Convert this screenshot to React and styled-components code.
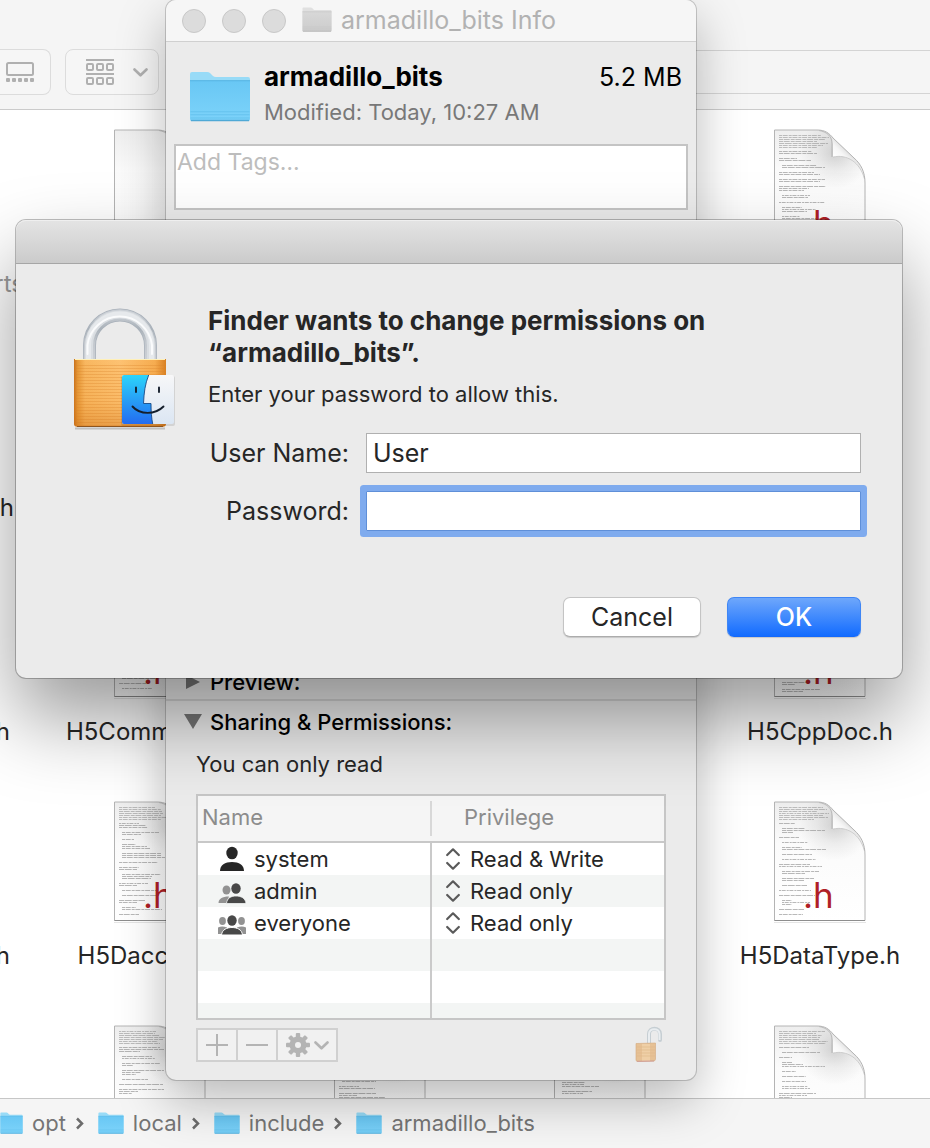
import React from "react";
import styled, { createGlobalStyle } from "styled-components";

const GlobalStyle = createGlobalStyle`
  *, *::before, *::after { box-sizing: border-box; }
  body {
    margin: 0;
    background: #fff;
    color: #262626;
    font-family: Inter, "Liberation Sans", sans-serif;
    font-size: 22px;
    line-height: 28px;
  }
  button, input, select, textarea { font: inherit; color: inherit; margin: 0; }
`;

/* ---------- Finder window ---------- */

const Desktop = styled.main`
  position: relative;
  height: 100vh;
  overflow: hidden;
`;

const FinderWindow = styled.div`
  display: flex;
  flex-direction: column;
  height: 100%;
`;

const Toolbar = styled.header`
  display: flex;
  align-items: flex-end;
  gap: 14px;
  height: 110px;
  flex: none;
  padding-bottom: 14px;
  background: #f5f5f5;
  border-bottom: 1px solid #cbcbcb;
`;

const ToolButton = styled.button`
  display: flex;
  align-items: center;
  justify-content: ${(p) => (p.$edge ? "flex-start" : "flex-end")};
  gap: 19px;
  width: ${(p) => (p.$edge ? 51 : 94)}px;
  height: 46px;
  padding: 0 ${(p) => (p.$edge ? 6 : 10)}px;
  border: 1px solid #dcdcdc;
  border-left-width: ${(p) => (p.$edge ? 0 : 1)}px;
  border-radius: ${(p) => (p.$edge ? "0 8px 8px 0" : "8px")};
  background: #f6f6f6;
  color: #b0b0b0;
`;

const ToolStrip = styled.div`
  flex: 1;
  height: 44px;
  margin-left: 28px;
  margin-bottom: 1px;
  border: 1px solid #d4d4d4;
  border-width: 1px 0;
`;

const FileArea = styled.section`
  flex: 1;
  min-height: 0;
  overflow: hidden;
`;

const FileGrid = styled.div`
  display: grid;
  grid-template-columns: 50px repeat(auto-fill, 220px);
  grid-auto-rows: 224px;
`;

const FileCell = styled.figure`
  grid-column: ${(p) => p.$col};
  grid-row: ${(p) => p.$row};
  display: flex;
  flex-direction: column;
  align-items: center;
  gap: 18px;
  margin: 0;
  padding-top: 19px;
`;

const FileLabel = styled.figcaption`
  font-size: 24px;
  line-height: 28px;
  white-space: nowrap;
`;

const EdgeLabel = styled.span`
  grid-column: 1;
  grid-row: ${(p) => p.$row};
  align-self: end;
  display: flex;
  justify-content: flex-end;
  width: ${(p) => p.$reach}px;
  padding-bottom: 36px;
  font-size: 24px;
  color: ${(p) => (p.$dim ? "#9a9a9a" : "inherit")};
`;

const PathBar = styled.nav`
  display: flex;
  align-items: center;
  flex: none;
  height: 50px;
  padding-bottom: 2px;
  border-top: 1px solid #c6c6c6;
  background: #f5f5f5;
  color: #757575;
`;

const Crumb = styled.a`
  display: flex;
  align-items: center;
  gap: 9px;
  color: inherit;
  text-decoration: none;
`;

const CrumbArrow = styled.svg`
  margin: 2px 14px 0 10px;
`;

/* ---------- Info window ---------- */

const InfoWindow = styled.section`
  position: absolute;
  top: 0;
  bottom: 68px;
  left: 166px;
  width: 530px;
  display: flex;
  flex-direction: column;
  border-radius: 10px;
  background: #ebebeb;
  box-shadow: 0 0 0 1px rgba(0, 0, 0, 0.18), 0 20px 50px rgba(0, 0, 0, 0.28);
`;

const InfoTitleBar = styled.header`
  display: flex;
  align-items: center;
  gap: 16px;
  flex: none;
  height: 42px;
  padding: 0 16px;
  border-bottom: 1px solid #d0d0d0;
  border-radius: 10px 10px 0 0;
  background: #f6f6f6;
`;

const WindowDot = styled.button`
  width: 24px;
  height: 24px;
  padding: 0;
  border: 1px solid #c8c8c8;
  border-radius: 50%;
  background: #dcdcdc;
`;

const WindowTitle = styled.h2`
  display: flex;
  align-items: center;
  gap: 9px;
  margin: 0;
  padding-bottom: 2px;
  font-size: 25px;
  font-weight: 400;
  color: #b2b2b2;
`;

const Summary = styled.div`
  display: flex;
  gap: 13px;
  padding: 19px 14px 18px 23px;
`;

const SummaryFolder = styled.div`
  display: flex;
  padding-top: 10px;
`;

const SummaryText = styled.div`
  flex: 1;
`;

const SummaryLine = styled.div`
  display: flex;
  justify-content: space-between;
  font-size: 25px;
  line-height: 32px;
  color: #000;
`;

const FolderName = styled.strong`
  font-size: 26px;
  font-weight: 700;
`;

const Modified = styled.div`
  padding-top: 5px;
  line-height: 28px;
  color: #787878;
`;

const TagBox = styled.textarea`
  display: block;
  height: 66px;
  margin: 0 8px;
  padding: 2px 1px;
  border: 2px solid #c4c4c4;
  border-radius: 0;
  background: #fff;
  resize: none;
  font-size: 23px;
  &::placeholder { color: #bdbdbd; }
`;

const Sections = styled.div`
  flex: 1;
  display: flex;
  flex-direction: column;
  justify-content: flex-end;
`;

const Disclosure = styled.button`
  display: flex;
  align-items: center;
  gap: 8px;
  width: 100%;
  height: ${(p) => (p.$open ? 42 : 37)}px;
  padding: 0 18px;
  border: 0;
  border-bottom: ${(p) => (p.$open ? "0" : "2px solid #d2d2d2")};
  background: none;
  font-size: 22px;
  font-weight: 500;
  color: #000;
`;

const Permissions = styled.div`
  padding: 7px 30px 18px;
`;

const Note = styled.p`
  margin: 0 0 16px;
`;

const TableBox = styled.div`
  height: 226px;
  overflow: hidden;
  border: 2px solid #c6c6c6;
  background: #fff;
`;

const Table = styled.table`
  width: 100%;
  table-layout: fixed;
  border-collapse: separate;
  border-spacing: 0;
`;

const HeadCell = styled.th`
  width: ${(p) => (p.$first ? "234px" : "auto")};
  height: 47px;
  padding: 5px 0;
  background: #f5f5f5;
  border-bottom: 2px solid #c8c8c8;
  font-weight: 400;
  text-align: left;
  color: #8c8c8c;
`;

const HeadText = styled.div`
  height: 35px;
  line-height: 32px;
  padding-left: ${(p) => (p.$first ? 4 : 32)}px;
  border-right: ${(p) => (p.$first ? "2px solid #d8d8d8" : "0")};
`;

const Row = styled.tr`
  background: #fff;
  &:nth-child(even) { background: #f3f5f4; }
`;

const Cell = styled.td`
  height: 32px;
  padding: 0;
  border-right: ${(p) => (p.$first ? "2px solid #cacaca" : "0")};
`;

const CellContent = styled.div`
  display: flex;
  align-items: center;
  gap: ${(p) => (p.$first ? 7 : 10)}px;
  padding-left: ${(p) => (p.$first ? 20 : 14)}px;
`;

const PrivilegeSelect = styled.select`
  appearance: none;
  height: 28px;
  padding: 0;
  border: 0;
  background: none;
`;

const Actions = styled.div`
  display: flex;
  justify-content: space-between;
  align-items: flex-start;
  padding: 6px 3px 0 0;
`;

const ActionGroup = styled.div`
  display: flex;
  padding: 2px 0 0 0;
`;

const ActionButton = styled.button`
  display: flex;
  align-items: center;
  justify-content: center;
  gap: 4px;
  width: ${(p) => (p.$wide ? 62 : 42)}px;
  height: 34px;
  padding: 0;
  border: 2px solid #d0d0d0;
  background: #f1f1f1;
  color: #b4b4b4;
  & + & { margin-left: -2px; }
`;

const LockButton = styled.button`
  display: flex;
  padding: 0;
  border: 0;
  background: none;
`;

/* ---------- Password dialog ---------- */

const Dialog = styled.section`
  position: absolute;
  top: 220px;
  left: 16px;
  right: 28px;
  border-radius: 10px;
  background: #ebebeb;
  box-shadow: 0 0 0 1px rgba(0, 0, 0, 0.25), 0 40px 80px rgba(0, 0, 0, 0.4);
`;

const DialogBar = styled.div`
  height: 44px;
  border-bottom: 1px solid #a6a6a6;
  border-radius: 10px 10px 0 0;
  background: linear-gradient(#e4e4e4, #cbcbcb);
  box-shadow: inset 0 1px 0 #efefef;
`;

const DialogBody = styled.div`
  display: flex;
  gap: 33px;
  padding: 41px 41px 41px 57px;
`;

const LockHolder = styled.div`
  flex: none;
  display: flex;
  align-items: flex-start;
  padding-top: 3px;
`;

const DialogForm = styled.form`
  flex: 1;
`;

const DialogTitle = styled.h1`
  max-width: 560px;
  margin: 0;
  font-size: 26px;
  line-height: 32px;
  font-weight: 700;
`;

const Hint = styled.p`
  margin: 11px 0 25px;
`;

const Fields = styled.div`
  display: grid;
  grid-template-columns: 141px 1fr;
  column-gap: 17px;
  row-gap: 18px;
  align-items: center;
  font-size: 25px;
`;

const FieldLabel = styled.label`
  justify-self: end;
  white-space: nowrap;
`;

const Field = styled.input`
  width: 100%;
  min-width: 0;
  height: 40px;
  padding: 0 6px;
  border: 1px solid ${(p) => (p.$focused ? "#5f8fd8" : "#b0b0b0")};
  border-radius: ${(p) => (p.$focused ? 1 : 0)}px;
  background: #fff;
  outline: none;
  box-shadow: ${(p) => (p.$focused ? "0 0 0 6px #7fabee" : "none")};
`;

const DialogButtons = styled.div`
  display: flex;
  justify-content: flex-end;
  gap: 26px;
  padding-top: 66px;
`;

const PushButton = styled.button`
  width: ${(p) => (p.$primary ? 134 : 138)}px;
  height: 40px;
  padding: 0;
  border: 1px solid ${(p) => (p.$primary ? "#3f86f5" : "#c4c4c4")};
  border-bottom-color: ${(p) => (p.$primary ? "#1468fa" : "#acacac")};
  border-radius: 7px;
  background: ${(p) => (p.$primary ? "linear-gradient(#6ea7fb, #136cff)" : "#fff")};
  box-shadow: 0 1px 1px rgba(0, 0, 0, 0.15);
  color: ${(p) => (p.$primary ? "#fff" : "#262626")};
  font-size: 25px;
  font-weight: ${(p) => (p.$primary ? 500 : 400)};
`;

/* ---------- Icons ---------- */

function Folder({ width, height, gray }) {
  const id = gray ? "folder-gray" : "folder-blue";
  return (
    <svg width={width} height={height} viewBox="0 0 62 50" preserveAspectRatio="none" aria-hidden="true">
      <defs>
        <linearGradient id={id} x1="0" y1="0" x2="0" y2="1">
          <stop offset="0" stopColor={gray ? "#d8d8d8" : "#68c7f4"} />
          <stop offset="1" stopColor={gray ? "#cccccc" : "#7dd3fa"} />
        </linearGradient>
      </defs>
      <path d="M1 47V3q0-2 2-2h15q2 0 3 1l3 3q1 1 3 1h32q2 0 2 2v39q0 2-2 2H3q-2 0-2-2z" fill={gray ? "#e0e0e0" : "#98dbf7"} />
      <path d="M1 9h60v38q0 2-2 2H3q-2 0-2-2z" fill={`url(#${id})`} />
      <path d="M1 9.500h60" stroke={gray ? "#bdbdbd" : "#57b4e2"} />
      <path d="M1.500 40h59M1.500 43h59M1.500 46h59" stroke={gray ? "#c6c6c6" : "#5fbdea"} opacity="0.7" />
      <path d="M2 48.500h58" stroke={gray ? "#b4b4b4" : "#4fa9d6"} strokeWidth="1.500" />
    </svg>
  );
}

function makeLines(seed) {
  let s = seed * 7919 + 13;
  const rand = () => {
    s = (s * 1103515245 + 12345) % 2147483648;
    return s / 2147483648;
  };
  rand();
  const lines = [];
  let y = 6;
  while (y < 115) {
    const dense = y < 20;
    const count = dense ? 7 : 1 + Math.floor(rand() * 3);
    const indent = y < 26 ? 0 : Math.floor(rand() * 2) * 3;
    for (let i = 0; i < count && y < 115; i += 1) {
      const share = dense ? 0.7 + rand() * 0.3 : 0.25 + rand() * 0.7;
      lines.push({ x: 6 + indent, y, w: Math.round(50 * share) - indent, dash: 1 + Math.round(rand() * 3), dense });
      y += 2;
    }
    y += dense ? 2 : 3;
  }
  return lines;
}

function DocumentIcon({ seed, blank }) {
  const page = "M1.500 1H44C52 1 56 4 60 9L81 29C88 35 92 43 92 54V119.500H1.500Z";
  const id = `doc${seed}`;
  return (
    <svg width="94" height="123" viewBox="0 0 94 123" aria-hidden="true">
      <defs>
        <linearGradient id={`${id}p`} x1="0" y1="0" x2="0" y2="1">
          <stop offset="0" stopColor="#eeeeee" />
          <stop offset="0.35" stopColor="#fbfbfb" />
          <stop offset="1" stopColor="#ffffff" />
        </linearGradient>
        <linearGradient id={`${id}f`} gradientUnits="userSpaceOnUse" x1="60" y1="28" x2="74" y2="14">
          <stop offset="0" stopColor="#ffffff" />
          <stop offset="0.45" stopColor="#f6f6f6" />
          <stop offset="0.8" stopColor="#dcdcdc" />
        </linearGradient>
        <radialGradient id={`${id}s`} cx="62" cy="24" r="36" gradientUnits="userSpaceOnUse">
          <stop offset="0" stopColor="#000" stopOpacity="0.15" />
          <stop offset="0.5" stopColor="#000" stopOpacity="0.06" />
          <stop offset="1" stopColor="#000" stopOpacity="0" />
        </radialGradient>
      </defs>
      <path d="M1 121.500H93" stroke="#000" strokeOpacity="0.1" />
      <path d={page} fill={`url(#${id}p)`} />
      {!blank && <path d={page} fill={`url(#${id}s)`} />}
      {!blank &&
        makeLines(seed).map((l, i) => (
          <path
            key={i}
            d={`M${l.x} ${l.y + 0.5}h${l.w}`}
            stroke="#8a8a8a"
            strokeWidth="0.800"
            strokeDasharray={`${l.dash + 1} 0.700 ${l.dash + 3} 1`}
            opacity={l.dense ? 0.65 : 0.75}
          />
        ))}
      <path d="M46 1.500C54 3 59 7 59 15V28" fill="none" stroke="#8c8c8c" strokeOpacity="0.45" />
      <path d="M50 1.500C57 4 60 8 60 15V28C74 25 87 33 91.500 50C91 41 87 35 81 29L60 9C57 5 54 2.500 50 1.500Z" fill={`url(#${id}f)`} />
      <path d="M60 28C74 25 87 33 91.500 50" fill="none" stroke="#bdbdbd" strokeWidth="0.700" />
      <path d={page} fill="none" stroke="#b4b4b4" />
      <path d="M1.500 119.500H92" stroke="#8e8e8e" />
      {!blank && (
        <text x="30" y="107" fill="#b01f26" fontFamily="Inter, sans-serif" fontSize="35">.h</text>
      )}
    </svg>
  );
}

function GalleryIcon() {
  return (
    <svg width="28" height="20" viewBox="0 0 28 20" aria-hidden="true">
      <rect x="1" y="1" width="26" height="12" rx="1.500" fill="none" stroke="currentColor" strokeWidth="2" />
      {[0, 6, 12, 18, 24].map((x) => (
        <rect key={x} x={x} y="16" width="4" height="4" rx="1" fill="currentColor" />
      ))}
    </svg>
  );
}

function GroupIcon() {
  return (
    <svg width="28" height="26" viewBox="0 0 28 26" fill="none" stroke="currentColor" strokeWidth="2" aria-hidden="true">
      <path d="M0 1H28M0 15H28" />
      {[5, 19].map((y) =>
        [1, 11, 21].map((x) => <rect key={`${x}-${y}`} x={x} y={y} width="6" height="6" rx="1" />)
      )}
    </svg>
  );
}

function ChevronDown({ width = 15, height = 9 }) {
  return (
    <svg width={width} height={height} viewBox="0 0 15 9" fill="none" stroke="currentColor" strokeWidth="2.600" strokeLinecap="round" strokeLinejoin="round" aria-hidden="true">
      <path d="M1.500 1.500L7.500 7.300L13.500 1.500" />
    </svg>
  );
}

function Triangle({ open }) {
  return (
    <svg width="18" height="16" viewBox="0 0 18 16" aria-hidden="true">
      <path d={open ? "M0 0H18L9 15Z" : "M2 1V15L16 8Z"} fill="#757575" />
    </svg>
  );
}

function UserIcon({ kind }) {
  return (
    <svg width="29" height="26" viewBox="0 0 29 26" aria-hidden="true">
      {kind === "single" && (
        <g fill="#262626">
          <ellipse cx="14" cy="7" rx="5.700" ry="6.300" />
          <path d="M2 25C2 19 7 16 14 16S26 19 26 25Z" />
        </g>
      )}
      {kind === "pair" && (
        <g>
          <ellipse cx="8.500" cy="12" rx="4" ry="4.500" fill="#929292" />
          <path d="M0.500 25C0.500 21 4 18.500 11 18.500L8.500 25Z" fill="#929292" />
          <ellipse cx="18" cy="10.500" rx="4.700" ry="5.300" fill="#484848" />
          <path d="M8.500 25.500C9 20 13 18 18 18S27.500 20 28 25.500Z" fill="#484848" stroke="#f3f5f4" strokeWidth="0.800" />
        </g>
      )}
      {kind === "group" && (
        <g>
          <ellipse cx="4.500" cy="11" rx="3.400" ry="4" fill="#929292" />
          <ellipse cx="23.500" cy="11" rx="3.400" ry="4" fill="#929292" />
          <path d="M0 24V17.500Q4 15.500 9 17.500V24ZM28 24V17.500Q24 15.500 19 17.500V24Z" fill="#929292" />
          <ellipse cx="14" cy="10.500" rx="5.600" ry="6" fill="#fff" />
          <ellipse cx="14" cy="10.500" rx="4.700" ry="5.200" fill="#484848" />
          <path d="M3.500 25C4 19.500 9 17.500 14 17.500S24 19.500 24.500 25Z" fill="#484848" stroke="#fff" />
        </g>
      )}
    </svg>
  );
}

function UpDown() {
  return (
    <svg width="14" height="22" viewBox="0 0 14 22" fill="none" stroke="#5a5a5a" strokeWidth="2.200" strokeLinecap="round" strokeLinejoin="round" aria-hidden="true">
      <path d="M1.200 7L7 1.300L12.800 7M1.200 15L7 20.700L12.800 15" />
    </svg>
  );
}

function Gear() {
  return (
    <svg width="24" height="24" viewBox="0 0 24 24" fill="currentColor" aria-hidden="true">
      {[0, 45, 90, 135].map((a) => (
        <rect key={a} x="9.800" y="0" width="4.400" height="24" rx="1" transform={`rotate(${a} 12 12)`} />
      ))}
      <circle cx="12" cy="12" r="8.500" />
      <circle cx="12" cy="12" r="3" fill="#f1f1f1" />
    </svg>
  );
}

function OpenLock() {
  return (
    <svg width="28" height="36" viewBox="0 0 28 36" aria-hidden="true">
      <path d="M14 17V8C14 1 25 1 25 8V14" fill="none" stroke="#c6ced3" strokeWidth="4" strokeLinecap="round" />
      <path d="M14 17V8C14 1.500 24.500 1.500 24.500 8V14" fill="none" stroke="#e9edf0" strokeWidth="2" />
      <path d="M1 17.500L20.500 17V33Q20.500 35 18.500 35L3 35.500Q1 35.500 1 34Z" fill="#e6c195" stroke="#d3a97d" strokeWidth="0.600" />
      <path d="M7 18h8v17H7z" fill="#efcfa6" />
      <path d="M1.500 21H20M1.500 24H20M1.500 27H20M1.500 30H20" stroke="#dfb98a" strokeWidth="0.700" />
      <path d="M2 35.300L19 35" stroke="#cf9c98" />
    </svg>
  );
}

function PadlockIcon() {
  const stripes = [];
  for (let y = 57; y < 118; y += 3) stripes.push(y);
  const arch = "M16.500 53V37.500A30.500 30.500 0 0 1 77.500 37.500V53";
  return (
    <svg width="102" height="124" viewBox="0 0 102 124" aria-hidden="true">
      <defs>
        <linearGradient id="brass" x1="0" y1="0" x2="1" y2="0">
          <stop offset="0" stopColor="#c8711c" />
          <stop offset="0.04" stopColor="#e59838" />
          <stop offset="0.12" stopColor="#f8b760" />
          <stop offset="0.5" stopColor="#fdc272" />
          <stop offset="0.88" stopColor="#f6ac50" />
          <stop offset="1" stopColor="#d87f22" />
        </linearGradient>
        <linearGradient id="brassShade" x1="0" y1="0" x2="0" y2="1">
          <stop offset="0" stopColor="#e88a20" stopOpacity="0" />
          <stop offset="0.6" stopColor="#e88a20" stopOpacity="0.12" />
          <stop offset="1" stopColor="#c96a10" stopOpacity="0.4" />
        </linearGradient>
        <linearGradient id="steel" x1="0" y1="0" x2="0" y2="1">
          <stop offset="0" stopColor="#c9ced4" />
          <stop offset="0.3" stopColor="#a9b1b9" />
          <stop offset="0.6" stopColor="#c3c8ce" />
          <stop offset="1" stopColor="#cdd1d6" />
        </linearGradient>
        <linearGradient id="faceBlue" x1="0" y1="0" x2="0" y2="1">
          <stop offset="0" stopColor="#2cd4fb" />
          <stop offset="1" stopColor="#236cf1" />
        </linearGradient>
        <linearGradient id="faceWhite" x1="0" y1="0" x2="0" y2="1">
          <stop offset="0" stopColor="#f7f7f8" />
          <stop offset="1" stopColor="#dbe6f3" />
        </linearGradient>
      </defs>
      <path d={arch} fill="none" stroke="#a9b1ba" strokeWidth="13" />
      <path d={arch} fill="none" stroke="url(#steel)" strokeWidth="11.500" />
      <path d="M16 53V37.500A31 31 0 0 1 78 37.500V53" fill="none" stroke="#d9dde1" strokeWidth="8" />
      <path d="M15.500 53V37.500A31.500 31.500 0 0 1 78.500 37.500V53" fill="none" stroke="#e6e9ec" strokeWidth="5" />
      <path d="M14.500 46V37A32.500 32.500 0 0 1 79 37V46" fill="none" stroke="#fafbfc" strokeWidth="2" strokeLinecap="round" />
      <path d="M2 120.500H92" stroke="#000" strokeOpacity="0.18" strokeWidth="2" />
      <path d="M1 51H93V116Q93 119 88 119H6Q1 119 1 116Z" fill="url(#brass)" />
      {stripes.map((y) => (
        <path key={y} d={`M2 ${y}.500H92`} stroke="#d9832a" strokeOpacity="0.32" />
      ))}
      <path d="M1 51H93V116Q93 119 88 119H6Q1 119 1 116Z" fill="url(#brassShade)" />
      <path d="M2 51.500H92" stroke="#fff0b8" />
      <path d="M4 118.500H90" stroke="#8d5520" />
      <rect x="48" y="68" width="54" height="50" rx="2" fill="#000" opacity="0.1" />
      <rect x="49" y="67" width="52" height="49" rx="2" fill="url(#faceWhite)" />
      <path d="M51 67H75.700C72 76 71 85 70.500 95.500H78C78 103 78.500 110 79.700 116H51Q49 116 49 114V69Q49 67 51 67Z" fill="url(#faceBlue)" />
      <path d="M75.700 67C72 76 71 85 70.500 95.500H78C78 103 78.500 110 79.700 116" fill="none" stroke="#174a86" strokeWidth="0.900" />
      <path d="M63 79.500V84M86 79.500V84M59.500 98.500C67 107 82 107 90.500 98.500" fill="none" stroke="#151f2c" strokeWidth="1.900" strokeLinecap="round" />
    </svg>
  );
}

/* ---------- Data ---------- */

const files = [
  { col: 2, row: 1, blank: true },
  { col: 5, row: 1 },
  { col: 2, row: 3, name: "H5CommonFG.h" },
  { col: 5, row: 3, name: "H5CppDoc.h" },
  { col: 2, row: 4, name: "H5DaccProp.h" },
  { col: 5, row: 4, name: "H5DataType.h" },
  { col: 2, row: 5 },
  { col: 3, row: 5 },
  { col: 4, row: 5 },
  { col: 5, row: 5 },
];

const users = [
  { name: "system", kind: "single", privilege: "Read & Write" },
  { name: "admin", kind: "pair", privilege: "Read only" },
  { name: "everyone", kind: "group", privilege: "Read only" },
];

const path = ["opt", "local", "include", "armadillo_bits"];

export default function App() {
  return (
    <Desktop>
      <GlobalStyle />
      <FinderWindow>
        <Toolbar>
          <ToolButton $edge type="button" aria-label="Gallery view"><GalleryIcon /></ToolButton>
          <ToolButton type="button" aria-label="Group items"><GroupIcon /><ChevronDown /></ToolButton>
          <ToolStrip />
        </Toolbar>
        <FileArea>
          <FileGrid>
            <EdgeLabel $row={1} $reach={24} $dim>rts</EdgeLabel>
            <EdgeLabel $row={2} $reach={14}>.h</EdgeLabel>
            <EdgeLabel $row={3} $reach={10}>.h</EdgeLabel>
            <EdgeLabel $row={4} $reach={10}>.h</EdgeLabel>
            {files.map((f, i) => (
              <FileCell key={i} $col={f.col} $row={f.row}>
                <DocumentIcon seed={i + 1} blank={f.blank} />
                {f.name && <FileLabel>{f.name}</FileLabel>}
              </FileCell>
            ))}
          </FileGrid>
        </FileArea>
        <PathBar aria-label="Path">
          {path.map((p, i) => (
            <React.Fragment key={p}>
              {i > 0 && (
                <CrumbArrow width="8" height="13" viewBox="0 0 8 13" fill="none" stroke="#6c6c6c" strokeWidth="2.500" aria-hidden="true">
                  <path d="M1 1.500L6 6.500L1 11.500" />
                </CrumbArrow>
              )}
              <Crumb href="#">
                <Folder width={i === 0 ? 23 : 26} height={22} />
                {p}
              </Crumb>
            </React.Fragment>
          ))}
        </PathBar>
      </FinderWindow>

      <InfoWindow aria-label="armadillo_bits Info">
        <InfoTitleBar>
          <WindowDot type="button" aria-label="Close" />
          <WindowDot type="button" aria-label="Minimize" />
          <WindowDot type="button" aria-label="Zoom" />
          <WindowTitle><Folder width={30} height={25} gray />armadillo_bits Info</WindowTitle>
        </InfoTitleBar>
        <Summary>
          <SummaryFolder><Folder width={62} height={51} /></SummaryFolder>
          <SummaryText>
            <SummaryLine><FolderName>armadillo_bits</FolderName><span>5.2 MB</span></SummaryLine>
            <Modified>Modified: Today, 10:27 AM</Modified>
          </SummaryText>
        </Summary>
        <TagBox aria-label="Tags" placeholder="Add Tags…" />
        <Sections>
          <Disclosure type="button" aria-expanded="false"><Triangle />Preview:</Disclosure>
          <Disclosure $open type="button" aria-expanded="true"><Triangle open />Sharing &amp; Permissions:</Disclosure>
          <Permissions>
            <Note>You can only read</Note>
            <TableBox>
              <Table>
                <thead>
                  <tr>
                    <HeadCell $first scope="col"><HeadText $first>Name</HeadText></HeadCell>
                    <HeadCell scope="col"><HeadText>Privilege</HeadText></HeadCell>
                  </tr>
                </thead>
                <tbody>
                  {users.map((u) => (
                    <Row key={u.name}>
                      <Cell $first><CellContent $first><UserIcon kind={u.kind} />{u.name}</CellContent></Cell>
                      <Cell>
                        <CellContent>
                          <UpDown />
                          <PrivilegeSelect aria-label={`Privilege for ${u.name}`} defaultValue={u.privilege}>
                            <option>{u.privilege}</option>
                          </PrivilegeSelect>
                        </CellContent>
                      </Cell>
                    </Row>
                  ))}
                  {[0, 1, 2].map((n) => (
                    <Row key={n}><Cell $first /><Cell /></Row>
                  ))}
                </tbody>
              </Table>
            </TableBox>
            <Actions>
              <ActionGroup>
                <ActionButton type="button" aria-label="Add">
                  <svg width="22" height="22" viewBox="0 0 22 22" stroke="currentColor" strokeWidth="2"><path d="M0 11H22M11 0V22" /></svg>
                </ActionButton>
                <ActionButton type="button" aria-label="Remove">
                  <svg width="22" height="22" viewBox="0 0 22 22" stroke="currentColor" strokeWidth="2"><path d="M0 11H22" /></svg>
                </ActionButton>
                <ActionButton $wide type="button" aria-label="Actions"><Gear /><ChevronDown /></ActionButton>
              </ActionGroup>
              <LockButton type="button" aria-label="Lock"><OpenLock /></LockButton>
            </Actions>
          </Permissions>
        </Sections>
      </InfoWindow>

      <Dialog role="dialog" aria-labelledby="dialog-title">
        <DialogBar />
        <DialogBody>
          <LockHolder><PadlockIcon /></LockHolder>
          <DialogForm onSubmit={(e) => e.preventDefault()}>
            <DialogTitle id="dialog-title">Finder wants to change permissions on “armadillo_bits”.</DialogTitle>
            <Hint>Enter your password to allow this.</Hint>
            <Fields>
              <FieldLabel htmlFor="user">User Name:</FieldLabel>
              <Field id="user" type="text" defaultValue="User" />
              <FieldLabel htmlFor="password">Password:</FieldLabel>
              <Field id="password" type="password" $focused />
            </Fields>
            <DialogButtons>
              <PushButton type="button">Cancel</PushButton>
              <PushButton $primary type="submit">OK</PushButton>
            </DialogButtons>
          </DialogForm>
        </DialogBody>
      </Dialog>
    </Desktop>
  );
}
